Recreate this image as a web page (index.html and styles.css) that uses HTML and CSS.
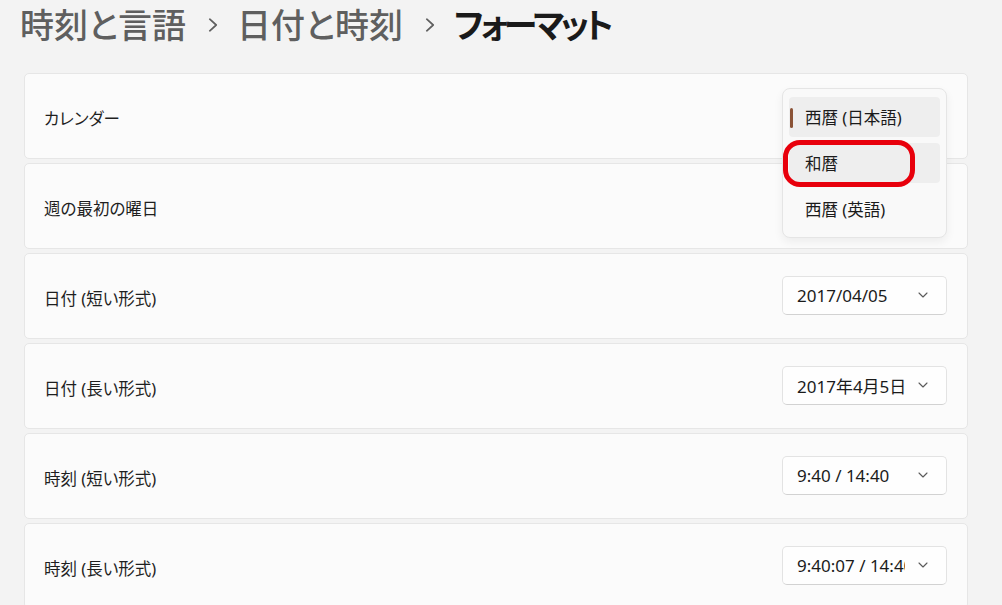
FILE: index.html
```html
<!DOCTYPE html>
<html lang="ja">
<head>
<meta charset="utf-8">
<title>フォーマット</title>
<link rel="stylesheet" href="styles.css">
</head>
<body>
<header class="crumbs">
  <span class="crumb">時刻と言語</span>
  <svg class="sep" width="10" height="14" viewBox="0 0 10 14"><path d="M1.8 1.2 L8.2 7 L1.8 12.8" fill="none" stroke="#5f5f5f" stroke-width="1.7" stroke-linecap="round" stroke-linejoin="round"/></svg>
  <span class="crumb">日付と時刻</span>
  <svg class="sep" width="10" height="14" viewBox="0 0 10 14"><path d="M1.8 1.2 L8.2 7 L1.8 12.8" fill="none" stroke="#5f5f5f" stroke-width="1.7" stroke-linecap="round" stroke-linejoin="round"/></svg>
  <span class="crumb current">フォーマット</span>
</header>

<main class="list">
  <section class="card">
    <span class="label">カレンダー</span>
    <div class="popup">
      <div class="item selected"><span class="accent"></span>西暦 (日本語)</div>
      <div class="item hover"><span class="ring"></span>和暦</div>
      <div class="item">西暦 (英語)</div>
    </div>
  </section>
  <section class="card">
    <span class="label">週の最初の曜日</span>
  </section>
  <section class="card">
    <span class="label">日付 (短い形式)</span>
    <div class="select"><span class="value">2017/04/05</span><svg class="chev" width="10" height="6" viewBox="0 0 10 6"><path d="M1 1 L5 5 L9 1" fill="none" stroke="#5a5a5a" stroke-width="1.1" stroke-linecap="round" stroke-linejoin="round"/></svg></div>
  </section>
  <section class="card">
    <span class="label">日付 (長い形式)</span>
    <div class="select"><span class="value">2017年4月5日</span><svg class="chev" width="10" height="6" viewBox="0 0 10 6"><path d="M1 1 L5 5 L9 1" fill="none" stroke="#5a5a5a" stroke-width="1.1" stroke-linecap="round" stroke-linejoin="round"/></svg></div>
  </section>
  <section class="card">
    <span class="label">時刻 (短い形式)</span>
    <div class="select"><span class="value">9:40 / 14:40</span><svg class="chev" width="10" height="6" viewBox="0 0 10 6"><path d="M1 1 L5 5 L9 1" fill="none" stroke="#5a5a5a" stroke-width="1.1" stroke-linecap="round" stroke-linejoin="round"/></svg></div>
  </section>
  <section class="card">
    <span class="label">時刻 (長い形式)</span>
    <div class="select"><span class="value">9:40:07 / 14:40:07</span><svg class="chev" width="10" height="6" viewBox="0 0 10 6"><path d="M1 1 L5 5 L9 1" fill="none" stroke="#5a5a5a" stroke-width="1.1" stroke-linecap="round" stroke-linejoin="round"/></svg></div>
  </section>
</main>
</body>
</html>
```

FILE: styles.css
```css
* { box-sizing: border-box; }

html, body {
  margin: 0;
  height: 100%;
  overflow: hidden;
}

body {
  background: #f3f3f3;
  font-family: "Noto Sans", "Noto Sans CJK JP", sans-serif;
  color: #1b1b1b;
}

.crumbs {
  height: 73px;
  padding: 1px 0 0 20px;
  display: flex;
  align-items: flex-start;
  gap: 22px;
}

.crumb {
  font-family: "Noto Sans CJK JP", sans-serif;
  font-size: 34px;
  font-weight: 500;
  line-height: 46px;
  color: #5f5f5f;
  font-feature-settings: "palt";
}

.crumb.current {
  color: #1a1a1a;
  font-weight: 700;
  letter-spacing: -4px;
}

.sep {
  margin-top: 17px;
  margin-right: -3px;
}

.list {
  padding: 0 34px 0 24px;
  display: flex;
  flex-direction: column;
  gap: 4px;
}

.card {
  position: relative;
  height: 86px;
  flex: none;
  background: #fbfbfb;
  border: 1px solid #e6e6e6;
  border-radius: 5px;
  padding: 4px 20px 0 19px;
  display: flex;
  align-items: center;
  justify-content: space-between;
}

.label {
  font-size: 16.5px;
  font-feature-settings: "palt";
  color: #1f1f1f;
}

.select {
  width: 165px;
  height: 39px;
  margin-top: -6px;
  background: #fefefe;
  border: 1px solid #e3e3e3;
  border-bottom-color: #d2d2d2;
  border-radius: 5px;
  padding-left: 14px;
  display: flex;
  align-items: center;
}

.value {
  width: 108px;
  overflow: hidden;
  white-space: nowrap;
  font-size: 17px;
  color: #1b1b1b;
  font-feature-settings: "palt";
}

.chev {
  margin-left: 13px;
}

.popup {
  position: absolute;
  top: 14px;
  right: 20px;
  width: 165px;
  padding: 8px 6px;
  background: #f9f9f9;
  border: 1px solid #e5e5e5;
  border-radius: 8px;
  box-shadow: 0 4px 10px rgba(0, 0, 0, 0.06);
  display: flex;
  flex-direction: column;
  gap: 6px;
  z-index: 2;
}

.item {
  position: relative;
  height: 40px;
  border-radius: 4px;
  padding-left: 16px;
  display: flex;
  align-items: center;
  font-size: 16.5px;
  color: #1b1b1b;
}

.item.selected,
.item.hover {
  background: #eeeeee;
}

.accent {
  position: absolute;
  left: 1px;
  top: 11px;
  width: 3px;
  height: 20px;
  border-radius: 2px;
  background: #8a5236;
}

.ring {
  position: absolute;
  left: -6px;
  top: -3px;
  width: 132px;
  height: 47px;
  border: 5px solid #e8000c;
  border-radius: 17px;
}
```
